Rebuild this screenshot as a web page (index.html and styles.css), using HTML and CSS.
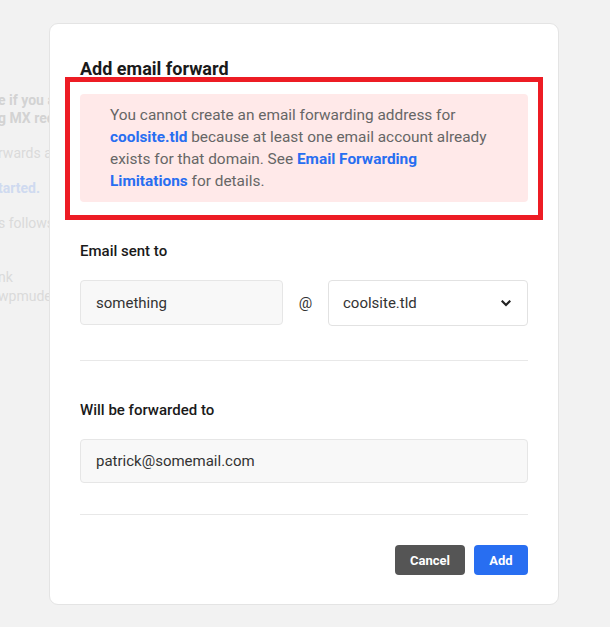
FILE: index.html
```html
<!DOCTYPE html>
<html lang="en">
<head>
<meta charset="utf-8">
<title>Add email forward</title>
<link rel="stylesheet" href="styles.css">
</head>
<body>
<div class="page">
  <p class="bg-text strong">e if you a<br>g MX rec</p>
  <p class="bg-text">rwards as</p>
  <p class="bg-text strong link">tarted.</p>
  <p class="bg-text">s follows</p>
  <p class="bg-text loose">nk<br>wpmudev</p>
</div>

<div class="modal">
  <h2 class="modal-title">Add email forward</h2>

  <div class="annot">
    <div class="notice">
      You cannot create an email forwarding address for<br>
      <a class="notice-link" href="#">coolsite.tld</a> because at least one email account already<br>
      exists for that domain. See <a class="notice-link" href="#">Email Forwarding</a><br>
      <a class="notice-link" href="#">Limitations</a> for details.
    </div>
  </div>

  <div class="field first">
    <div class="field-label">Email sent to</div>
    <div class="email-row">
      <input class="text-input" type="text" value="something">
      <span class="at">@</span>
      <div class="select">
        <span class="select-value">coolsite.tld</span>
        <svg class="chevron" width="10" height="7" viewBox="0 0 10 7"><polyline points="1.5,1.5 5,5 8.5,1.5" fill="none" stroke="#222" stroke-width="2.2" stroke-linecap="square"/></svg>
      </div>
    </div>
  </div>

  <div class="divider"></div>

  <div class="field second">
    <div class="field-label">Will be forwarded to</div>
    <input class="text-input full" type="text" value="patrick@somemail.com">
  </div>

  <div class="divider lower"></div>

  <div class="actions">
    <button class="btn btn-cancel" type="button">Cancel</button>
    <button class="btn btn-add" type="button">Add</button>
  </div>
</div>
</body>
</html>
```

FILE: styles.css
```css
* {
  box-sizing: border-box;
}

html, body {
  margin: 0;
  padding: 0;
}

body {
  width: 610px;
  height: 627px;
  background: #f2f2f2;
  font-family: Roboto, "Noto Sans", "Liberation Sans", sans-serif;
  overflow: hidden;
  position: relative;
}

/* faded page content behind the modal (only the part left of the modal shows) */
.page {
  width: 49px;
  overflow: hidden;
  padding-top: 91px;
}

.bg-text {
  margin: 0 0 17px -2px;
  font-size: 14px;
  line-height: 18px;
  color: #dadada;
  white-space: nowrap;
}

.bg-text.strong {
  font-weight: 700;
  color: #d3d3d3;
}

.bg-text.link {
  color: #cfdaf0;
}

.bg-text.loose {
  margin-top: 36px;
  line-height: 19px;
}

/* modal */
.modal {
  position: absolute;
  left: 49px;
  top: 23px;
  width: 510px;
  background: #fff;
  border: 1px solid #e4e4e4;
  border-radius: 9px;
  padding: 36px 30px 29px;
}

.modal-title {
  margin: 0;
  font-size: 18px;
  line-height: 17px;
  font-weight: 700;
  color: #1a1a1a;
}

.annot {
  margin: 0 -15px;
  border: 5px solid #ed1c24;
  padding: 12px 10px 13px;
}

.notice {
  background: #ffe9e9;
  border-radius: 4px;
  padding: 10px 16px 10px 30px;
  font-size: 15.4px;
  line-height: 22px;
  color: #666;
  white-space: nowrap;
}

.notice-link {
  color: #286ef1;
  font-weight: 700;
  text-decoration: none;
}

.field.first {
  margin-top: 21px;
}

.field.second {
  margin-top: 39px;
}

.field-label {
  font-size: 15px;
  line-height: 20px;
  font-weight: 500;
  color: #1a1a1a;
}

.email-row {
  margin-top: 19px;
  display: grid;
  grid-template-columns: 203px 1fr 200px;
  align-items: start;
}

.text-input {
  display: block;
  width: 100%;
  height: 45px;
  margin: 0;
  padding: 0 15px;
  background: #f8f8f8;
  border: 1px solid #e6e6e6;
  border-radius: 4px;
  font-family: inherit;
  font-size: 15px;
  color: #333;
  outline: none;
}

.text-input.full {
  margin-top: 19px;
  height: 44px;
}

.at {
  font-size: 15px;
  line-height: 46px;
  color: #333;
  text-align: center;
}

.select {
  height: 46px;
  display: flex;
  align-items: center;
  justify-content: space-between;
  padding: 0 16px 0 14px;
  background: #fff;
  border: 1px solid #e2e2e2;
  border-radius: 4px;
  font-size: 15px;
  color: #333;
}

.chevron {
  display: block;
}

.divider {
  margin-top: 34px;
  height: 1px;
  background: #e8e8e8;
}

.divider.lower {
  margin-top: 31px;
}

.actions {
  margin-top: 30px;
  display: flex;
  justify-content: flex-end;
  gap: 9px;
}

.btn {
  height: 30px;
  border: none;
  border-radius: 4px;
  font-family: inherit;
  font-size: 13px;
  font-weight: 700;
  color: #fff;
  cursor: pointer;
}

.btn-cancel {
  background: #555;
  width: 70px;
}

.btn-add {
  background: #286ef1;
  width: 54px;
}
```
